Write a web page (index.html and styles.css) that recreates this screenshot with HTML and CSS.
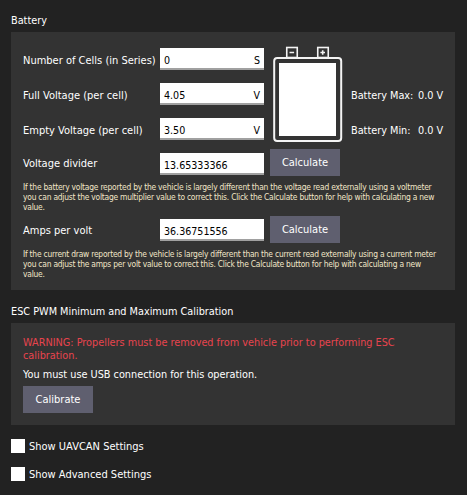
FILE: index.html
```html
<!DOCTYPE html>
<html lang="en">
<head>
<meta charset="utf-8">
<title>Battery</title>
<link rel="stylesheet" href="styles.css">
</head>
<body>
<h2 class="heading">Battery</h2>
<section class="panel battery">
  <div class="top">
    <div class="fields">
      <div class="row"><span class="label">Number of Cells (in Series)</span><div class="input"><span>0</span><span>S</span></div></div>
      <div class="row"><span class="label">Full Voltage (per cell)</span><div class="input"><span>4.05</span><span>V</span></div></div>
      <div class="row"><span class="label">Empty Voltage (per cell)</span><div class="input"><span>3.50</span><span>V</span></div></div>
    </div>
    <svg class="icon" width="70" height="96" viewBox="0 0 70 96">
      <g fill="none" stroke="#f4f4f4">
        <rect x="13.75" y="1.5" width="10.5" height="10" stroke-width="1.6"/>
        <rect x="44.75" y="1.5" width="10.5" height="10" stroke-width="1.6"/>
        <rect x="1.2" y="12" width="67" height="83" rx="3" stroke-width="2"/>
      </g>
      <rect x="6" y="17" width="57" height="73" fill="#fff"/>
      <path d="M16.5 6.5h4.6M47.4 6.5h4.6M49.7 4.2v4.6" stroke="#f4f4f4" stroke-width="1.6" fill="none"/>
    </svg>
    <div class="stats">
      <div class="stat"><span class="stat-name">Battery Max:</span><span>0.0 V</span></div>
      <div class="stat"><span class="stat-name">Battery Min:</span><span>0.0 V</span></div>
    </div>
  </div>
  <div class="row calc first-calc"><span class="label">Voltage divider</span><div class="input"><span>13.65333366</span></div><button class="btn">Calculate</button></div>
  <p class="hint">If the battery voltage reported by the vehicle is largely different than the voltage read externally using a voltmeter you can adjust the voltage multiplier value to correct this. Click the Calculate button for help with calculating a new value.</p>
  <div class="row calc"><span class="label">Amps per volt</span><div class="input"><span>36.36751556</span></div><button class="btn">Calculate</button></div>
  <p class="hint">If the current draw reported by the vehicle is largely different than the current read externally using a current meter you can adjust the amps per volt value to correct this. Click the Calculate button for help with calculating a new value.</p>
</section>
<h2 class="heading second">ESC PWM Minimum and Maximum Calibration</h2>
<section class="panel esc">
  <p class="warning">WARNING: Propellers must be removed from vehicle prior to performing ESC calibration.</p>
  <p class="usb">You must use USB connection for this operation.</p>
  <button class="btn">Calibrate</button>
</section>
<div class="check"><span class="box"></span><span class="check-text">Show UAVCAN Settings</span></div>
<div class="check"><span class="box"></span><span class="check-text">Show Advanced Settings</span></div>
</body>
</html>
```
FILE: styles.css
```css
* { box-sizing: border-box; }
html, body { height: 100%; }
body {
  margin: 0;
  padding: 14px 12px 0 11px;
  background: #222222;
  color: #ffffff;
  font-family: "DejaVu Sans", sans-serif;
  font-stretch: condensed;
  font-size: 11px;
  line-height: 14px;
  overflow: hidden;
}
.heading { margin: 0 0 4px; font-size: 10.8px; font-weight: 400; line-height: 14px; }
.second { margin-top: 15px; }
.panel { background: #333333; padding: 0 12px; }
.battery { height: 258px; padding-top: 16px; }
.top { display: flex; height: 101px; }
.fields { display: flex; flex-direction: column; gap: 13px; }
.row { display: flex; align-items: center; height: 22px; }
.label { width: 137px; flex: none; white-space: nowrap; padding-top: 3px; }
.input {
  width: 104px; height: 22px; flex: none;
  background: #fff; color: #000;
  border-bottom: 2px solid #a0a0a0;
  display: flex; justify-content: space-between; align-items: center;
  padding: 3px 4px 0;
  font-size: 10.6px;
}
.icon { flex: none; margin: -2px 0 0 9px; }
.stats { display: flex; flex-direction: column; gap: 21px; margin: 41px 0 0 8px; font-size: 10.8px; }
.stat { display: flex; white-space: nowrap; }
.stat-name { width: 67px; }
.calc { height: 27px; }
.calc .input { align-self: flex-start; margin-top: 3px; }
.first-calc .input { margin-top: 4px; }
.btn {
  height: 27px; width: 70px; padding: 1px 0 0; border: 0;
  background: #5f5f6f; color: #fff;
  font: inherit; flex: none;
}
.calc .btn { margin-left: 6px; }
.hint { margin: 6px 0 4px; font-size: 8.4px; letter-spacing: -0.22px; line-height: 10px; color: #f2e6c8; }
.esc { height: 102px; padding-top: 13px; }
.warning { margin: 0; color: #e8444e; font-size: 10.8px; line-height: 13px; }
.usb { margin: 6px 0 5px; line-height: 13px; font-size: 10.8px; }
.check { display: flex; align-items: center; gap: 4px; height: 14px; margin-top: 14px; }
.check-text { padding-top: 2px; }
.box { width: 14px; height: 14px; background: #fff; flex: none; }
```
